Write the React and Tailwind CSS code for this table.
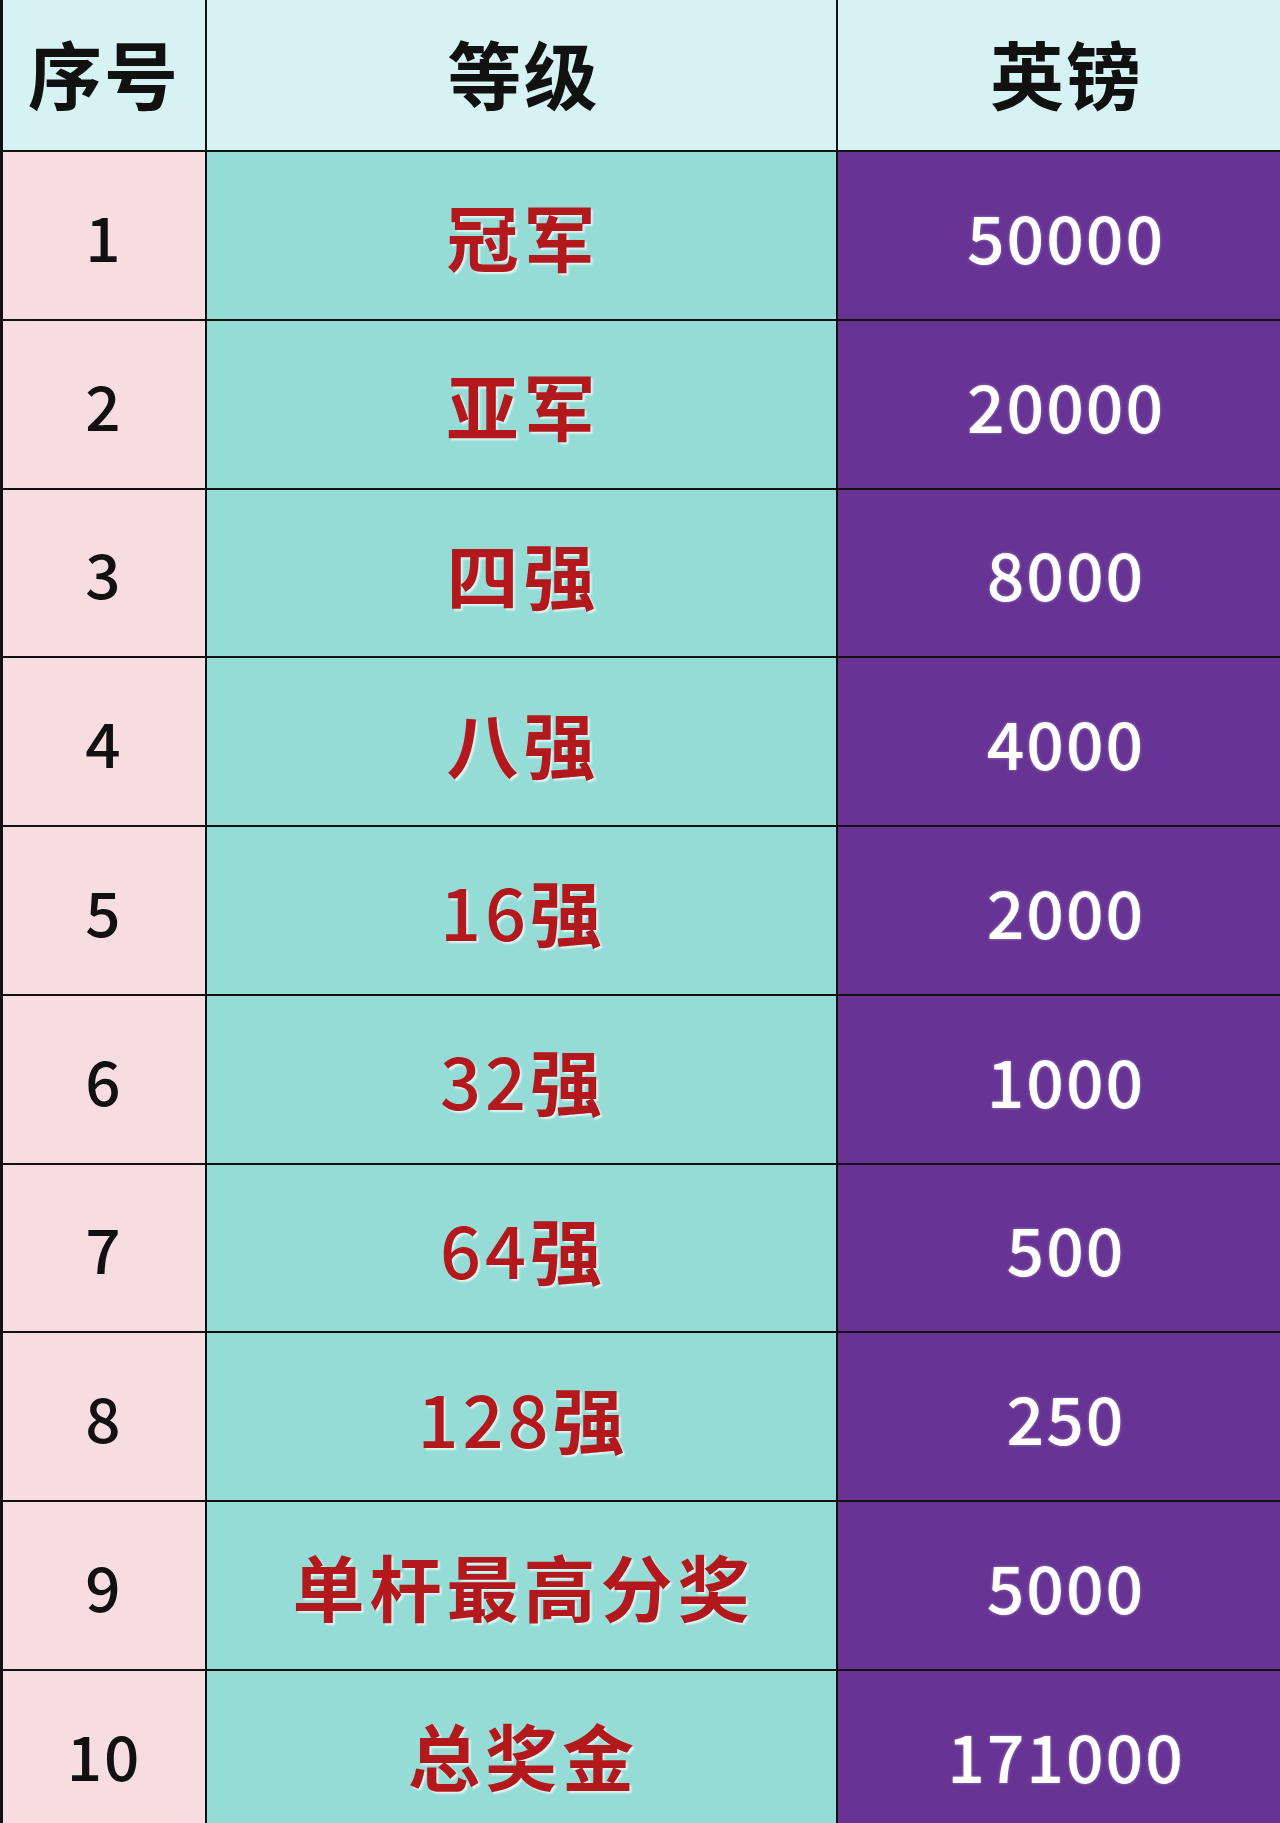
import React from "react";

const rows = [
  ["1", "冠军", "50000"],
  ["2", "亚军", "20000"],
  ["3", "四强", "8000"],
  ["4", "八强", "4000"],
  ["5", "16强", "2000"],
  ["6", "32强", "1000"],
  ["7", "64强", "500"],
  ["8", "128强", "250"],
  ["9", "单杆最高分奖", "5000"],
  ["10", "总奖金", "171000"],
];

function Level({ text }) {
  const m = text.match(/^(\d+)(.*)$/);
  if (m) {
    return (
      <>
        <span className="font-medium tracking-[4px]">{m[1]}</span>
        <span>{m[2]}</span>
      </>
    );
  }
  return <span>{text}</span>;
}

export default function App() {
  return (
    <div
      className="w-[1280px] h-[1823px] overflow-hidden bg-[#673495]"
      style={{ fontFamily: '"Noto Sans CJK SC", "Noto Sans", sans-serif' }}
    >
      <div className="flex h-[152px] border-b-2 border-[#111] bg-[#d6f2f3]">
        <div className="w-[207px] shrink-0 border-l-[3px] border-r-2 border-[#111] flex items-center justify-center pb-[8px] text-[74px] font-bold text-[#111] tracking-[2px]">
          序号
        </div>
        <div className="w-[631px] shrink-0 border-r-2 border-[#111] flex items-center justify-center pb-[8px] pl-[4px] text-[74px] font-bold text-[#111] tracking-[2px]">
          等级
        </div>
        <div className="flex-1 flex items-center justify-center pb-[8px] pl-[14px] text-[74px] font-bold text-[#111] tracking-[2px]">
          英镑
        </div>
      </div>
      {rows.map(([n, level, pound]) => (
        <div key={n} className="flex h-[168.75px] border-b-2 border-[#111]">
          <div className="w-[207px] shrink-0 border-l-[3px] border-r-2 border-[#111] bg-[#f8dde0] flex items-center justify-center text-[62px] font-medium text-[#111] tracking-[2px]">
            {n}
          </div>
          <div className="w-[631px] shrink-0 border-r-2 border-[#111] bg-[#95dcd7] flex items-center justify-center pl-[4px] text-[72px] font-bold text-[#b3191c] tracking-[5px] [text-shadow:2px_2px_2px_rgba(255,255,255,0.75)]">
            <Level text={level} />
          </div>
          <div className="flex-1 bg-[#673495] flex items-center justify-center pl-[14px] text-[66px] font-medium text-white tracking-[2px] [text-shadow:0_0_3px_rgba(255,255,255,0.4)]">
            {pound}
          </div>
        </div>
      ))}
    </div>
  );
}
